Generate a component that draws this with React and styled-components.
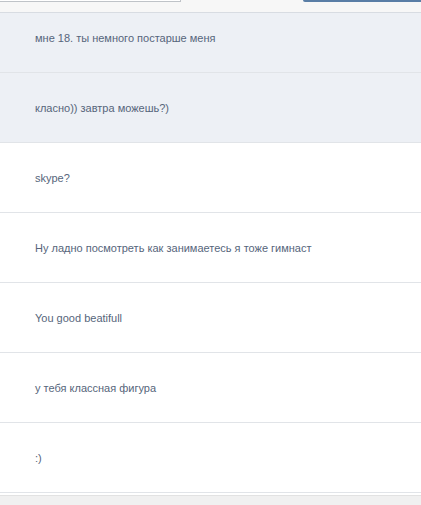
import React from 'react'
import styled, { createGlobalStyle } from 'styled-components'

const messages = [
  { text: 'мне 18. ты немного постарше меня', unread: true },
  { text: 'класно)) завтра можешь?)', unread: true },
  { text: 'skype?' },
  { text: 'Ну ладно посмотреть как занимаетесь я тоже гимнаст' },
  { text: 'You good beatifull' },
  { text: 'у тебя классная фигура' },
  { text: ':)' },
]

const GlobalStyle = createGlobalStyle`
  html, body {
    margin: 0;
    padding: 0;
    background: #fff;
    overflow: hidden;
  }
  body {
    font-family: 'Liberation Sans', Arial, sans-serif;
  }
`

const App = () => {
  return (
    <>
      <GlobalStyle />
      <TopBar>
        <SearchBox />
        <SendButton />
      </TopBar>
      <List>
        {messages.map((m, i) => (
          <Row key={i} $unread={m.unread}>
            <Text>{m.text}</Text>
          </Row>
        ))}
      </List>
      <Footer />
    </>
  )
}

export default App

const TopBar = styled.div`
  position: fixed;
  top: 0;
  left: 0;
  right: 0;
  height: 12px;
  background: #f7f7f7;
  border-bottom: 1px solid #d8dce2;
  display: flex;
  justify-content: space-between;
  align-items: flex-start;
  z-index: 2;
`

const SearchBox = styled.div`
  width: 180px;
  height: 1px;
  background: #fff;
  border-bottom: 1px solid #bfc3c8;
  border-right: 1px solid #bfc3c8;
`

const SendButton = styled.div`
  width: 118px;
  height: 2px;
  background: #5a7ea6;
  border-bottom-left-radius: 2px;
`

const List = styled.div`
  padding-top: 3px;
`

const Row = styled.div`
  height: 69px;
  border-bottom: 1px solid #e1e4e8;
  background: ${(p) => (p.$unread ? '#edf0f5' : '#fff')};
  display: flex;
  align-items: center;
  padding-left: 35px;
`

const Text = styled.span`
  font-size: 11px;
  color: #56657b;
`

const Footer = styled.div`
  margin-top: 2px;
  height: 20px;
  background: #f0f0f0;
  border-top: 1px solid #e2e2e2;
`
